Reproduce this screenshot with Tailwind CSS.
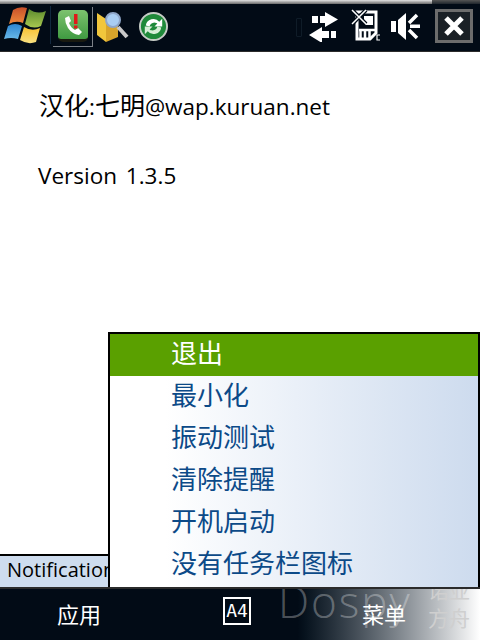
<!DOCTYPE html>
<html>
<head>
<meta charset="utf-8" />
<title>Notification</title>
<script src="https://cdn.jsdelivr.net/npm/@tailwindcss/browser@4"></script>
</head>
<body class="m-0 bg-white overflow-hidden">
<div class="relative w-[480px] h-[640px] flex flex-col overflow-hidden font-['Open_Sans','Noto_Sans_CJK_SC',sans-serif]">

	<!-- top bar -->
	<header class="h-[52px] shrink-0 flex flex-col bg-[#020b16]">
		<div class="h-[5px] flex">
			<div class="flex-1 bg-gradient-to-b from-[#e4e4e4] to-[#6a6a6a]"></div>
			<div class="w-[48px] bg-gradient-to-b from-[#555555] to-[#20262c]"></div>
		</div>
		<div class="flex-1 flex items-center pr-[7px] pb-[4px]">
			<!-- start flag -->
			<svg class="ml-[4px] shrink-0" width="42" height="38" viewBox="0 0 42 38">
				<defs>
					<linearGradient id="flagRed" x1="0" y1="0" x2="0" y2="1"><stop offset="0" stop-color="#c8502a"/><stop offset="1" stop-color="#f08a3c"/></linearGradient>
					<linearGradient id="flagGreen" x1="0" y1="0" x2="0" y2="1"><stop offset="0" stop-color="#5c8a2e"/><stop offset="1" stop-color="#a8c850"/></linearGradient>
					<linearGradient id="flagBlue" x1="0" y1="0" x2="0" y2="1"><stop offset="0" stop-color="#2f86d0"/><stop offset="1" stop-color="#68b8e8"/></linearGradient>
					<linearGradient id="flagYellow" x1="0" y1="0" x2="0" y2="1"><stop offset="0" stop-color="#f8c030"/><stop offset="1" stop-color="#f8e080"/></linearGradient>
				</defs>
				<path d="M9 4 Q15 0 23 2 L19 17 Q12 14 5 18Z" fill="url(#flagRed)"/>
				<path d="M25 3 Q33 9 42 5 L37 20 Q29 24 21 18Z" fill="url(#flagGreen)"/>
				<path d="M4 20 Q11 16 18 20 L14 33 Q7 31 0 33Z" fill="url(#flagBlue)"/>
				<path d="M20 21 Q28 26 36 22 L32 36 Q24 39 16 34Z" fill="url(#flagYellow)"/>
			</svg>
			<div class="w-[1px] h-[38px] ml-[4px] bg-[#12283f]"></div>
			<!-- selected notification app -->
			<div class="ml-[2px] mt-[3px] w-[40px] h-[40px] shrink-0 border-r border-b border-[#7d8288] flex items-center justify-center">
				<div class="w-[30px] h-[32px] rounded-[5px] bg-gradient-to-b from-[#7cc26e] to-[#3f9a42] border-b-[3px] border-[#1a1a10] flex items-center justify-center">
					<svg width="24" height="24" viewBox="0 0 24 24">
						<path d="M4 5 L8 3 L10 8 L8 10 Q10 15 14 17 L17 15 L21 19 L18 22 Q11 21 7 15 Q4 10 4 5Z" fill="#ffffff"/>
						<rect x="13" y="1" width="3.5" height="10" fill="#e01818"/>
						<rect x="13" y="12.5" width="3.5" height="3" fill="#e01818"/>
					</svg>
				</div>
			</div>
			<!-- folder search -->
			<svg class="ml-[3px] mt-[3px] shrink-0" width="33" height="33" viewBox="0 0 33 33">
				<path d="M1 3 L10 9 L10 32 L1 25Z" fill="#f1c63c"/>
				<path d="M10 9 L22 9 L22 27 L10 32Z" fill="#d8a52b"/>
				<path d="M22 17 L31 27" stroke="#c9c9c9" stroke-width="4"/>
				<circle cx="17" cy="10" r="7" fill="#a9cdf2" stroke="#8fa6c8" stroke-width="2"/>
			</svg>
			<!-- sync -->
			<svg class="ml-[10px] mt-[3px] shrink-0" width="29" height="29" viewBox="0 0 30 30">
				<circle cx="15" cy="15" r="14" fill="#1f8a3a" stroke="#c6ccc6" stroke-width="2"/>
				<path d="M7 14 A8 8 0 0 1 21 10 L24 7 L24 15 L16 15 L19 12 A5 5 0 0 0 11 15Z" fill="#ffffff"/>
				<path d="M23 16 A8 8 0 0 1 9 20 L6 23 L6 15 L14 15 L11 18 A5 5 0 0 0 19 15Z" fill="#d8efd8"/>
			</svg>
			<div class="flex-1"></div>
			<div class="w-[6px] h-[19px] mr-[6px] mt-[4px] border border-[#0f1c28] rounded-[1px]"></div>
			<!-- connectivity arrows -->
			<svg class="mt-[2px] shrink-0" width="30" height="32" viewBox="0 0 30 32">
				<path d="M4 6 H10 V13 H4Z M12 6 H17 V2 L30 9.500 L17 17 V13 H12Z" fill="#ffffff"/>
				<path d="M14 21 V17 L1 25 L14 33 V28 H21 V21Z M23 21 H28 V28 H23Z" fill="#ffffff"/>
			</svg>
			<!-- sd card -->
			<svg class="ml-[13px] mt-[1px] shrink-0" width="29" height="33" viewBox="0 0 29 33">
				<path d="M6 3 H25 V24 L19 30 H6Z" fill="none" stroke="#ffffff" stroke-width="3"/>
				<rect x="13" y="7" width="9" height="9" fill="#ffffff"/>
				<path d="M8 21 h17 M9.500 21 v8 M14 21 v8 M18.500 21 v8" stroke="#ffffff" stroke-width="2.500" fill="none"/>
				<path d="M1 1 L15 15 M15 1 L1 15" stroke="#020b16" stroke-width="4"/>
				<path d="M1 1 L15 15 M15 1 L1 15" stroke="#ffffff" stroke-width="1.500"/>
				<path d="M29 26 h-3 v5 h3" fill="none" stroke="#ffffff" stroke-width="1.200"/>
			</svg>
			<!-- volume off -->
			<svg class="ml-[11px] mt-[2px] shrink-0" width="29" height="30" viewBox="0 0 29 30">
				<rect x="0" y="10" width="5" height="11" fill="#ffffff"/>
				<path d="M7 9 L15 2 V29 L7 22Z" fill="#ffffff"/>
				<path d="M18 12 L26 4 M18 19 L26 27" stroke="#ffffff" stroke-width="3.500"/>
				<rect x="19" y="13.500" width="10" height="3.500" fill="#ffffff"/>
			</svg>
			<!-- close -->
			<div class="ml-[15px] mt-[1px] w-[38px] h-[34px] shrink-0 border-[3px] border-[#6c6c6c] bg-[#1a2026] flex items-center justify-center">
				<svg width="20" height="20" viewBox="0 0 20 20"><path d="M2 2 L18 18 M18 2 L2 18" stroke="#ffffff" stroke-width="5"/></svg>
			</div>
		</div>
		<div class="h-[2px] bg-[#2b2b2b]"></div>
	</header>

	<!-- page content -->
	<main class="flex-1 flex flex-col bg-white">
		<div class="pl-[39px] pt-[39px] text-[22.500px] leading-[28px] text-black"><span class="text-[25px]">汉化</span>:<span class="text-[25px]">七明</span>@wap.kuruan.net</div>
		<div class="pl-[38px] pt-[41px] text-[22.500px] leading-[28px] text-black [word-spacing:3px]">Version 1.3.5</div>
		<div class="flex-1"></div>
		<div class="h-[33px] border-t-2 border-black bg-[#cedcee] pl-[7px] text-[20px] leading-[28px] text-black whitespace-nowrap overflow-hidden">Notification</div>
	</main>

	<!-- bottom bar -->
	<footer class="relative h-[53px] shrink-0 border-t-2 border-[#2b2b2b] bg-gradient-to-r from-[#020b16] from-[62%] to-[#ffffff] overflow-hidden">
		<div class="absolute left-[278px] top-[-16px] text-[44px] leading-[56px] tracking-[2px] font-light text-white/30">Dospy</div>
		<div class="absolute left-[428px] top-[-13px] text-[21px] leading-[28px] text-[#cfcfcf]">诺亚</div>
		<div class="absolute left-[428px] top-[15px] text-[21px] leading-[28px] text-[#cfcfcf]">方舟</div>
		<div class="relative flex items-center h-full text-[22px] text-white">
			<span class="ml-[57px] w-[44px]">应用</span>
			<div class="ml-[122px] mb-[8px] w-[28px] h-[28px] border-2 border-white flex items-center justify-center text-[18px] leading-none font-['DejaVu_Sans_Mono',monospace]">A4</div>
			<span class="ml-[111px]">菜单</span>
		</div>
	</footer>

	<!-- popup menu -->
	<div class="absolute left-[108px] top-[332px] w-[372px] h-[255px] border-2 border-black border-b-0 bg-gradient-to-r from-[#ffffff] from-[15%] to-[#cddbee] text-[26px] text-[#0c4a88]">
		<div class="h-[42px] pl-[61px] leading-[39px] bg-[#5aa000] text-white">退出</div>
		<div class="h-[42px] pl-[61px] leading-[38px]">最小化</div>
		<div class="h-[42px] pl-[61px] leading-[38px]">振动测试</div>
		<div class="h-[42px] pl-[61px] leading-[38px]">清除提醒</div>
		<div class="h-[42px] pl-[61px] leading-[38px]">开机启动</div>
		<div class="h-[42px] pl-[61px] leading-[38px]">没有任务栏图标</div>
	</div>
</div>
</body>
</html>
